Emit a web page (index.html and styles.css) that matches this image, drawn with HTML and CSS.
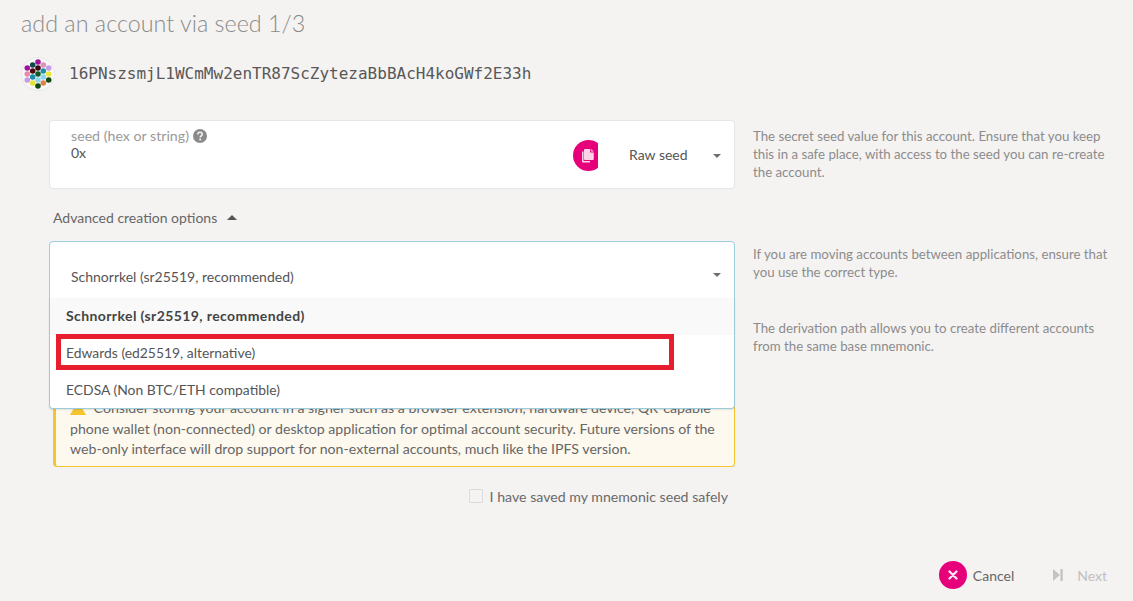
FILE: index.html
```html
<!DOCTYPE html>
<html lang="en">
<head>
<meta charset="utf-8">
<title>add an account via seed 1/3</title>
<link rel="stylesheet" href="styles.css">
</head>
<body>
<main class="page">
  <h1 class="title">add an account via seed 1/3</h1>
  <div class="address">
    <svg class="identicon" viewBox="0 0 34 34" width="34" height="34" aria-hidden="true">
      <circle cx="17" cy="17" r="16.5" fill="#f8f8f8" stroke="#e9e8e8"/>
      <circle cx="17" cy="5" r="2.8" fill="#a0129a"/>
      <circle cx="11.7" cy="8" r="2.8" fill="#0f4a4a"/>
      <circle cx="22.3" cy="8" r="2.8" fill="#e48fb4"/>
      <circle cx="6.3" cy="11" r="2.8" fill="#a0129a"/>
      <circle cx="17" cy="11" r="2.8" fill="#3a0a14"/>
      <circle cx="27.7" cy="11" r="2.8" fill="#c49be8"/>
      <circle cx="11.7" cy="14" r="2.8" fill="#4b0b14"/>
      <circle cx="22.3" cy="14" r="2.8" fill="#1e90a8"/>
      <circle cx="6.3" cy="17" r="2.8" fill="#e88aa5"/>
      <circle cx="17" cy="17" r="2.8" fill="#0c5a2c"/>
      <circle cx="27.7" cy="17" r="2.8" fill="#e8e83c"/>
      <circle cx="11.7" cy="20" r="2.8" fill="#1a8aa8"/>
      <circle cx="22.3" cy="20" r="2.8" fill="#8fd4ee"/>
      <circle cx="6.3" cy="23" r="2.8" fill="#c49be8"/>
      <circle cx="17" cy="23" r="2.8" fill="#8fd4ee"/>
      <circle cx="27.7" cy="23" r="2.8" fill="#0f4a14"/>
      <circle cx="11.7" cy="26" r="2.8" fill="#e4e438"/>
      <circle cx="22.3" cy="26" r="2.8" fill="#e08048"/>
      <circle cx="17" cy="29" r="2.8" fill="#0f4a14"/>
    </svg>
    <span class="address-text">16PNszsmjL1WCmMw2enTR87ScZytezaBbBAcH4koGWf2E33h</span>
  </div>

  <section class="form">
    <div class="row">
      <div class="box seed-box">
        <div class="seed-main">
          <div class="field-label">seed (hex or string)
            <svg class="help-icon" viewBox="0 0 14 14" width="14" height="14" aria-hidden="true">
              <circle cx="7" cy="7" r="7" fill="#8a8a8a"/>
              <path d="M4.8 5.4a2.2 2.2 0 0 1 4.4 0c0 1.4-2 1.5-2 3" fill="none" stroke="#f4f3f2" stroke-width="1.6"/>
              <rect x="6.3" y="9.6" width="1.8" height="1.8" fill="#f4f3f2"/>
            </svg>
          </div>
          <div class="field-value">0x</div>
        </div>
        <div class="copy-clip">
          <div class="copy-circle">
            <svg viewBox="0 0 14 16" width="14" height="16" aria-hidden="true">
              <path d="M1 3.5h1.5v9.5H9v1.5H2a1 1 0 0 1-1-1z" fill="#fbd3e8"/>
              <path d="M4 1h5.2v3.6h3.6V11a1 1 0 0 1-1 1H4a1 1 0 0 1-1-1V2a1 1 0 0 1 1-1z" fill="#fbd3e8"/>
              <path d="M10.2 1l2.6 2.6h-2.6z" fill="#fbd3e8"/>
            </svg>
          </div>
        </div>
        <div class="seed-type">Raw seed</div>
        <span class="caret-down"></span>
      </div>
      <p class="help">The secret seed value for this account. Ensure that you keep this in a safe place, with access to the seed you can re-create the account.</p>
    </div>

    <div class="advanced">Advanced creation options <span class="caret-up"></span></div>

    <div class="row type-row">
      <div class="box type-box">
        <div class="type-value">Schnorrkel (sr25519, recommended)</div>
        <span class="caret-down"></span>
        <div class="menu">
          <div class="menu-item selected">Schnorrkel (sr25519, recommended)</div>
          <div class="menu-item">Edwards (ed25519, alternative)</div>
          <div class="menu-item">ECDSA (Non BTC/ETH compatible)</div>
          <div class="highlight"></div>
        </div>
      </div>
      <p class="help">If you are moving accounts between applications, ensure that you use the correct type.</p>
    </div>

    <div class="row path-row">
      <div class="path-space"></div>
      <p class="help">The derivation path allows you to create different accounts from the same base mnemonic.</p>
    </div>

    <div class="warning">
      <svg class="warn-icon" viewBox="0 0 16 14" width="16" height="14" aria-hidden="true">
        <path d="M8 0l8 14H0z" fill="#f2c531"/>
      </svg>
      Consider storing your account in a signer such as a browser extension, hardware device, QR-capable phone wallet (non-connected) or desktop application for optimal account security. Future versions of the web-only interface will drop support for non-external accounts, much like the IPFS version.
    </div>

    <label class="saved">
      <span class="checkbox"></span>
      I have saved my mnemonic seed safely
    </label>
  </section>

  <footer class="actions">
    <div class="action">
      <span class="cancel-circle">
        <svg viewBox="0 0 10 10" width="10" height="10" aria-hidden="true">
          <path d="M1.5 1.5l7 7M8.5 1.5l-7 7" stroke="#fbe3f0" stroke-width="2.4" stroke-linecap="round"/>
        </svg>
      </span>
      <span>Cancel</span>
    </div>
    <div class="action disabled">
      <svg class="next-icon" viewBox="0 0 10 12" width="10" height="12" aria-hidden="true">
        <path d="M0 0l7 6-7 6z" fill="#c4c4c4"/>
        <rect x="7.4" y="0" width="2.4" height="12" fill="#c4c4c4"/>
      </svg>
      <span>Next</span>
    </div>
  </footer>
</main>
</body>
</html>
```

FILE: styles.css
```css
* { box-sizing: border-box; }
html, body { margin: 0; height: 100%; }
body {
  background: #f4f3f2;
  color: #4e4e4e;
  font-family: "Lato", "Open Sans", sans-serif;
  font-size: 14px;
  overflow: hidden;
}
.page {
  display: flex;
  flex-direction: column;
  height: 601px;
  position: relative;
}
.title {
  margin: 0;
  padding: 7px 0 0 21px;
  font-size: 23.35px;
  line-height: 32px;
  font-weight: 300;
  color: #8a8a88;
}
.address {
  display: flex;
  align-items: center;
  gap: 14px;
  margin: 18px 0 0 21px;
  height: 34px;
}
.identicon { flex: none; }
.address-text {
  font-family: "DejaVu Sans Mono", monospace;
  font-size: 16px;
  padding-bottom: 2px;
  color: #585858;
}
.form {
  margin: 29px 0 0 49px;
  width: 1084px;
  display: flex;
  flex-direction: column;
}
.row {
  display: flex;
  gap: 18px;
}
.box {
  flex: none;
  width: 686px;
  background: #fff;
  border: 1px solid #e6e6e6;
  border-radius: 4px;
  position: relative;
}
.help {
  margin: 7px 0 0;
  width: 362px;
  font-size: 13.25px;
  line-height: 18px;
  color: #8c8c8c;
}
.seed-box {
  height: 69px;
  display: flex;
  align-items: flex-start;
  padding-right: 13px;
}
.seed-main {
  flex: 1;
  padding: 7px 0 0 21px;
}
.field-label {
  display: flex;
  align-items: center;
  gap: 4px;
  font-size: 14.2px;
  line-height: 16px;
  color: #9a9a9a;
}
.help-icon { flex: none; }
.field-value {
  margin-top: 1px;
  font-size: 14px;
  line-height: 16px;
  color: #555;
}
.copy-clip {
  flex: none;
  width: 25px;
  height: 31px;
  margin-top: 19px;
  overflow: hidden;
}
.copy-circle {
  width: 31px;
  height: 31px;
  border-radius: 50%;
  background: #e6007a;
  display: flex;
  align-items: center;
  padding-left: 8px;
}
.seed-type {
  flex: none;
  margin: 25px 0 0 31px;
  width: 58px;
  line-height: 18px;
  color: #555;
  white-space: nowrap;
}
.caret-down {
  flex: none;
  align-self: flex-start;
  margin: 33px 0 0 26px;
  border-left: 4px solid transparent;
  border-right: 4px solid transparent;
  border-top: 4px solid #6e6e6e;
}
.advanced {
  display: flex;
  align-items: center;
  gap: 10px;
  width: 686px;
  height: 18px;
  margin: 19px 0 15px 4px;
  color: #666;
}
.caret-up {
  border-left: 5px solid transparent;
  border-right: 5px solid transparent;
  border-bottom: 5px solid #555;
}
.type-box {
  height: 69px;
  border-color: #9ccbdb;
  display: flex;
  justify-content: space-between;
  padding-left: 21px;
}
.type-value {
  margin-top: 26px;
  line-height: 18px;
  color: #555;
}
.type-box .caret-down {
  margin: 31px 13px 0 0;
}
.type-row .help { margin-top: 4px; }
.menu {
  position: absolute;
  z-index: 2;
  top: 56px;
  left: -1px;
  right: -1px;
  height: 111px;
  background: #fff;
  border: 1px solid #9ccbdb;
  border-top: none;
  border-radius: 0 0 4px 4px;
  box-shadow: 0 1px 2px rgba(0, 0, 0, .1);
}
.menu-item {
  height: 37px;
  line-height: 35px;
  padding-left: 16px;
  font-size: 13.9px;
  color: #555;
}
.menu-item.selected {
  background: #f9f9f9;
  font-weight: 700;
  font-size: 14px;
  letter-spacing: .4px;
  color: #444;
}
.highlight {
  position: absolute;
  top: 36px;
  left: 6px;
  width: 618px;
  height: 36px;
  border: 5px solid #e61e2d;
}
.path-row { margin-top: 10px; }
.path-space {
  flex: none;
  width: 686px;
  height: 69px;
}
.path-row .help { margin-top: -1px; }
.warning {
  width: 682px;
  height: 78px;
  margin: 0 0 0 4px;
  padding: 8px 10px 0 14px;
  background: #fdf9ee;
  border: 1px solid #f2c531;
  border-left-width: 3px;
  border-radius: 4px;
  font-size: 14.15px;
  line-height: 20.5px;
  color: #666;
}
.warn-icon {
  vertical-align: -2px;
  margin-right: 4px;
}
.saved {
  display: flex;
  align-items: center;
  justify-content: flex-end;
  gap: 7px;
  width: 686px;
  height: 18px;
  margin-top: 20px;
  padding-right: 7px;
  font-size: 14.15px;
  color: #6a6a6a;
}
.checkbox {
  width: 14px;
  height: 14px;
  border: 1px solid #dcdcdc;
  border-radius: 2px;
  background: #f4f3f2;
}
.actions {
  margin-top: auto;
  margin-bottom: 12px;
  padding-right: 26px;
  height: 28px;
  display: flex;
  justify-content: flex-end;
  align-items: center;
  gap: 39px;
}
.action {
  display: flex;
  align-items: center;
  gap: 6px;
  color: #666;
}
.cancel-circle {
  width: 28px;
  height: 28px;
  border-radius: 50%;
  background: #e6007a;
  display: flex;
  align-items: center;
  justify-content: center;
}
.action.disabled { color: #c0c0c0; gap: 14px; }
```
